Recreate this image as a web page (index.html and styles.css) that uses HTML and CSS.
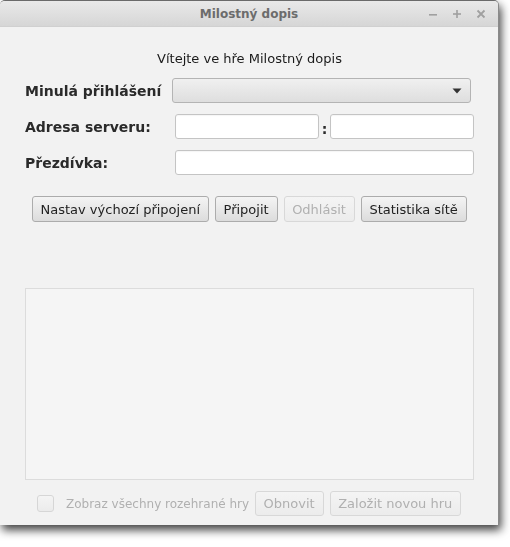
FILE: index.html
```html
<!DOCTYPE html>
<html lang="cs">
<head>
<meta charset="utf-8">
<title>Milostný dopis</title>
<link rel="stylesheet" href="styles.css">
</head>
<body>
<div class="desktop">
<div class="window">
  <div class="titlebar">
    <div class="tb-spacer"></div>
    <div class="tb-title">Milostný dopis</div>
    <div class="tb-controls">
      <svg class="tb-btn" width="10" height="10" viewBox="0 0 10 10"><rect x="1" y="5" width="8" height="1.6" fill="#a0a0a0"/></svg>
      <svg class="tb-btn" width="10" height="10" viewBox="0 0 10 10"><rect x="1" y="4.2" width="8" height="1.6" fill="#a0a0a0"/><rect x="4.2" y="1" width="1.6" height="8" fill="#a0a0a0"/></svg>
      <svg class="tb-btn" width="10" height="10" viewBox="0 0 10 10"><path d="M1.5 1.5 L8.5 8.5 M8.5 1.5 L1.5 8.5" stroke="#a0a0a0" stroke-width="1.8"/></svg>
    </div>
  </div>
  <div class="content">
    <div class="welcome">Vítejte ve hře Milostný dopis</div>
    <div class="form">
      <div class="label">Minulá přihlášení</div>
      <div class="combo">
        <svg class="combo-arrow" width="10" height="6" viewBox="0 0 10 6"><path d="M0.5 0.5 L9.5 0.5 L5 5.5 Z" fill="#333"/></svg>
      </div>
      <div class="label">Adresa serveru:</div>
      <div class="input"></div>
      <div class="colon">:</div>
      <div class="input"></div>
      <div class="label">Přezdívka:</div>
      <div class="input wide"></div>
    </div>
    <div class="buttons">
      <div class="btn">Nastav výchozí připojení</div>
      <div class="btn">Připojit</div>
      <div class="btn disabled">Odhlásit</div>
      <div class="btn">Statistika sítě</div>
    </div>
    <div class="list"></div>
    <div class="bottom">
      <div class="checkbox"></div>
      <div class="cb-label">Zobraz všechny rozehrané hry</div>
      <div class="btn disabled">Obnovit</div>
      <div class="btn disabled">Založit novou hru</div>
    </div>
  </div>
</div>
</div>
</body>
</html>
```
FILE: styles.css
```css
html, body {
  margin: 0;
  padding: 0;
  background: #ffffff;
}
body {
  font-family: "DejaVu Sans", "Noto Sans", sans-serif;
  font-size: 13px;
  color: #202020;
}
.desktop {
  width: 510px;
  height: 547px;
  filter: drop-shadow(2px 5px 5px rgba(0, 0, 0, 0.75));
}
.window {
  width: 499px;
  height: 525px;
  background: #f2f2f2;
  border-top: 1px solid #6a6a6a;
  border-right: 1px solid #8a8a8a;
  border-radius: 5px 5px 0 0;
  box-sizing: border-box;
  display: flex;
  flex-direction: column;
  overflow: hidden;
}
.titlebar {
  height: 25px;
  flex: none;
  background: linear-gradient(#e9e9e9, #d6d6d6);
  border-bottom: 1px solid #d0d0d0;
  display: grid;
  grid-template-columns: 1fr auto 1fr;
  align-items: center;
}
.tb-title {
  font-weight: bold;
  color: #6c6c6c;
  font-size: 12px;
  padding-top: 1px;
}
.tb-controls {
  display: flex;
  justify-content: flex-end;
  gap: 14px;
  padding-right: 12px;
}
.content {
  flex: 1;
  padding-left: 25px;
  display: flex;
  flex-direction: column;
}
.welcome {
  margin-top: 24px;
  height: 16px;
  line-height: 16px;
  text-align: center;
  width: 449px;
  color: #1a1a1a;
}
.form {
  margin-top: 11px;
  display: grid;
  grid-template-columns: 150px 144px 11px 144px;
  grid-auto-rows: 25px;
  row-gap: 11px;
  align-items: center;
}
.label {
  font-weight: bold;
  font-size: 14px;
  color: #2a2a2a;
}
.combo {
  grid-column: 2 / 5;
  height: 25px;
  margin-left: -3px;
  margin-right: 3px;
  box-sizing: border-box;
  border: 1px solid #b4b4b4;
  border-radius: 3px;
  background: linear-gradient(#f0f0f0, #dedede);
  display: flex;
  align-items: center;
  justify-content: flex-end;
  padding-right: 8px;
}
.combo-arrow {
  margin-top: 1px;
}
.input {
  height: 25px;
  box-sizing: border-box;
  border: 1px solid #c4c4c4;
  border-radius: 3px;
  background: #ffffff;
  box-shadow: inset 0 1px 1px rgba(0, 0, 0, 0.04);
}
.input.wide {
  grid-column: 2 / 5;
}
.colon {
  font-weight: bold;
  font-size: 14px;
  text-align: center;
  padding-top: 4px;
  color: #2a2a2a;
}
.buttons {
  margin-top: 21px;
  margin-left: 7px;
  display: flex;
  gap: 6px;
}
.btn {
  height: 26px;
  box-sizing: border-box;
  padding: 0 8px 0 7.5px;
  border: 1px solid #acacac;
  border-radius: 3px;
  background: linear-gradient(#f4f4f4, #dcdcdc);
  display: flex;
  align-items: center;
  color: #222;
  white-space: nowrap;
}
.btn.disabled {
  color: #b0b0b0;
  border-color: #d8d8d8;
  background: linear-gradient(#f4f4f4, #ececec);
}
.list {
  margin-top: 66px;
  width: 449px;
  height: 192px;
  box-sizing: border-box;
  border: 1px solid #dcdcdc;
  background: #f5f5f5;
}
.bottom {
  margin-top: 11px;
  margin-left: 12px;
  display: flex;
  align-items: center;
}
.bottom .btn {
  height: 25px;
  margin-left: 6px;
}
.checkbox {
  width: 17px;
  height: 17px;
  box-sizing: border-box;
  border: 1px solid #d6d6d6;
  border-radius: 3px;
  background: linear-gradient(#f4f4f4, #ebebeb);
}
.cb-label {
  margin-left: 12px;
  font-size: 12px;
  color: #b0b0b0;
}
```
